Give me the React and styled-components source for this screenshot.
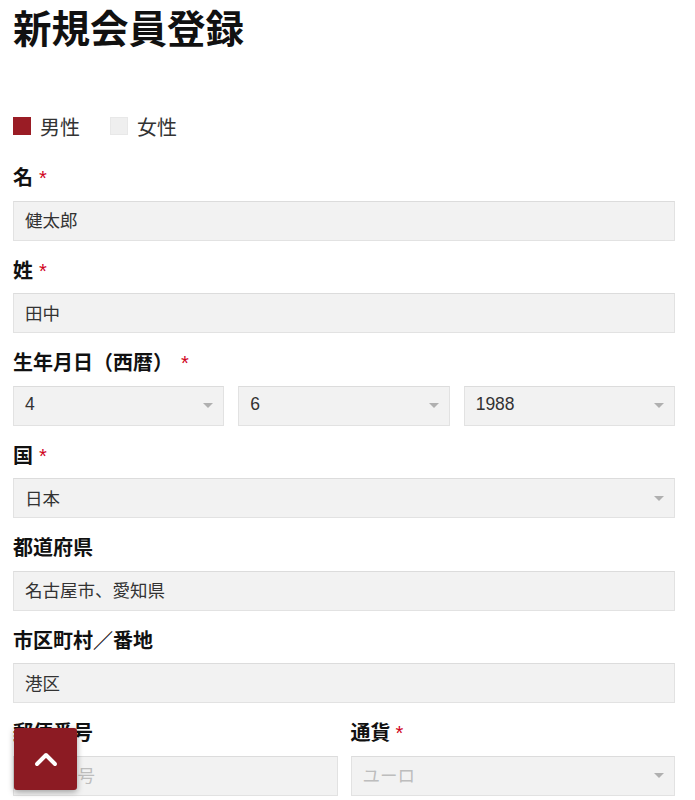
import React from "react";
import styled, { createGlobalStyle } from "styled-components";

const GlobalStyle = createGlobalStyle`
    html, body {
        margin: 0;
        padding: 0;
        overflow: hidden;
        background: #fff;
    }
    body {
        font-family: "Liberation Sans", "Noto Sans CJK JP", sans-serif;
        color: #222;
    }
    * {
        box-sizing: border-box;
    }
`;

const Page = styled.div`
    padding: 7px 20px 0 13px;
`;

const Title = styled.h1`
    margin: 0 0 59px;
    font-size: 38.5px;
    line-height: 46px;
    font-weight: 700;
    color: #111;
`;

const GenderRow = styled.div`
    display: flex;
    align-items: center;
    gap: 30px;
    height: 28px;
    margin-bottom: 21px;
`;

const GenderOption = styled.label`
    display: flex;
    align-items: center;
    gap: 9px;
    font-size: 20px;
    color: #333;
`;

const Box = styled.span`
    width: 18px;
    height: 18px;
    background: ${props => (props.checked ? "#9a1c25" : "#efefef")};
    border: 1px solid ${props => (props.checked ? "#9a1c25" : "#e8e8e8")};
`;

const Field = styled.div`
    margin-bottom: 13px;
`;

const Label = styled.div`
    font-size: 20px;
    line-height: 28px;
    font-weight: 700;
    color: #111;
    padding-top: 3px;
    margin-bottom: 8.5px;
`;

const Required = styled.span`
    color: #d0021b;
    font-weight: 400;
    margin-left: ${props => props.gap || 6}px;
`;

const Input = styled.div`
    height: 40px;
    display: flex;
    align-items: center;
    padding: 0 11px 2px;
    background: #f2f2f2;
    border: 1px solid #e2e2e2;
    border-top-color: #dcdcdc;
    font-size: 17.5px;
    color: ${props => (props.placeholder ? "#bdbdbd" : "#333")};
`;

const Select = styled(Input)`
    justify-content: space-between;
    padding-right: 10px;
`;

const Caret = styled.span`
    width: 0;
    height: 0;
    margin-top: 2px;
    border-left: 5px solid transparent;
    border-right: 5px solid transparent;
    border-top: 5px solid #b0b0b0;
`;

const Columns = styled.div`
    display: grid;
    grid-template-columns: repeat(${props => props.count}, 1fr);
    column-gap: ${props => props.gap}px;
`;

const BackToTop = styled.button`
    position: fixed;
    left: 14px;
    bottom: 10px;
    width: 63px;
    height: 62px;
    border: none;
    border-radius: 3px;
    background: #8c1b23;
    box-shadow: 0 2px 6px rgba(0, 0, 0, 0.35);
    display: flex;
    align-items: center;
    justify-content: center;
    padding: 0;
`;

const SelectField = ({ value, placeholder }) => (
    <Select placeholder={placeholder}>
        <span>{value}</span>
        <Caret />
    </Select>
);

export default function App() {
    return (
        <>
            <GlobalStyle />
            <Page>
                <Title>新規会員登録</Title>
                <GenderRow>
                    <GenderOption>
                        <Box checked />
                        男性
                    </GenderOption>
                    <GenderOption>
                        <Box />
                        女性
                    </GenderOption>
                </GenderRow>

                <Field>
                    <Label>名<Required>*</Required></Label>
                    <Input>健太郎</Input>
                </Field>

                <Field>
                    <Label>姓<Required>*</Required></Label>
                    <Input>田中</Input>
                </Field>

                <Field>
                    <Label>生年月日（西暦）<Required gap={8}>*</Required></Label>
                    <Columns count={3} gap={14}>
                        <SelectField value="4" />
                        <SelectField value="6" />
                        <SelectField value="1988" />
                    </Columns>
                </Field>

                <Field>
                    <Label>国<Required>*</Required></Label>
                    <SelectField value="日本" />
                </Field>

                <Field>
                    <Label>都道府県</Label>
                    <Input>名古屋市、愛知県</Input>
                </Field>

                <Field>
                    <Label>市区町村／番地</Label>
                    <Input>港区</Input>
                </Field>

                <Columns count={2} gap={13}>
                    <Field>
                        <Label>郵便番号</Label>
                        <Input placeholder>郵便番号</Input>
                    </Field>
                    <Field>
                        <Label>通貨<Required gap={5}>*</Required></Label>
                        <SelectField value="ユーロ" placeholder />
                    </Field>
                </Columns>
            </Page>
            <BackToTop aria-label="ページトップへ">
                <svg width="26" height="16" viewBox="0 0 26 16">
                    <path d="M4 13 L13 4 L22 13" fill="none" stroke="#fff" strokeWidth="4" strokeLinecap="round" strokeLinejoin="round" />
                </svg>
            </BackToTop>
        </>
    );
}
